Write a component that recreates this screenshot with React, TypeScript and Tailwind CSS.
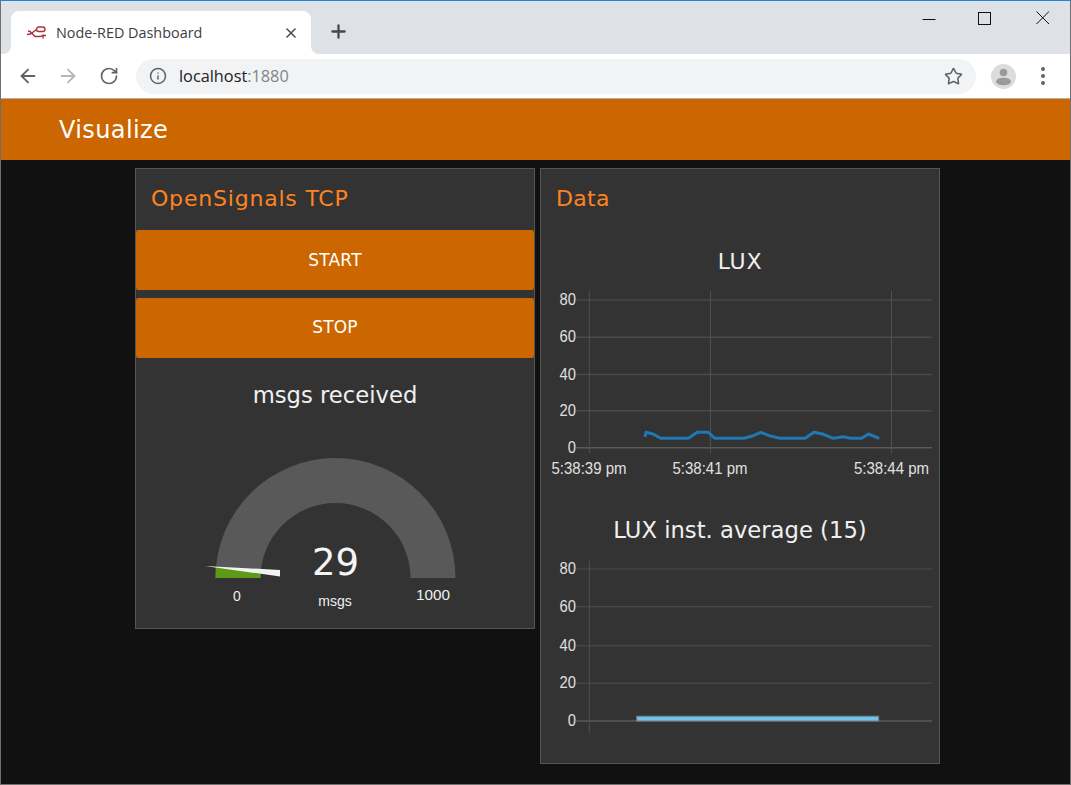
import React from 'react'
import { ArrowLeft, ArrowRight, RotateCw, Info, Star, Plus, X } from 'lucide-react'

const ARIAL = 'Liberation Sans, Arial, sans-serif'

const lineOne =
  '645,437 646,432.3 653,434 660.7,438.3 688.3,438.3 697.3,432.3 708.3,432.3 715,438.3 744,438.3 751.7,436.3 760.7,432.3 769.3,435.7 780,438.3 805,438.3 814,432.3 822.7,434 833.3,438.3 843.3,436.7 850.7,438.3 861.7,438.3 868.3,434 879.3,438.3'

function YLabels({ ys }: { ys: number[] }) {
  return (
    <>
      {['80', '60', '40', '20', '0'].map((label, i) => (
        <text
          key={label}
          x={576}
          y={ys[i] + 5}
          textAnchor="end"
          fontSize={16}
          textLength={label.length * 8.2}
          lengthAdjust="spacingAndGlyphs"
          fill="#e0e0e0"
          fontFamily={ARIAL}
        >
          {label}
        </text>
      ))}
    </>
  )
}

function LuxChart() {
  const ys = [300, 337.3, 374.5, 410.7, 447.7]
  return (
    <svg viewBox="541 280 398 200" className="block w-[398px] h-[200px]">
      {ys.map((y, i) => (
        <line key={y} x1={576} x2={932} y1={y} y2={y} stroke={i === 4 ? '#5a5a5a' : '#4a4a4a'} strokeWidth={1.4} />
      ))}
      {[589.3, 710.5, 891.5].map((x) => (
        <line key={x} x1={x} x2={x} y1={291} y2={453} stroke="#505050" strokeWidth={1} />
      ))}
      <YLabels ys={ys} />
      {[
        ['5:38:39 pm', 551.5],
        ['5:38:41 pm', 672.5],
        ['5:38:44 pm', 854],
      ].map(([label, x]) => (
        <text
          key={label}
          x={x}
          y={474}
          fontSize={16}
          textLength={75}
          lengthAdjust="spacingAndGlyphs"
          fill="#e0e0e0"
          fontFamily={ARIAL}
        >
          {label}
        </text>
      ))}
      <polyline points={lineOne} fill="none" stroke="#1f77b4" strokeWidth={3} strokeLinejoin="round" />
    </svg>
  )
}

function AverageChart() {
  const ys = [569, 606.7, 645.7, 683.3, 721]
  return (
    <svg viewBox="541 550 398 190" className="block w-[398px] h-[190px]">
      {ys.map((y, i) => (
        <line key={y} x1={576} x2={932} y1={y} y2={y} stroke={i === 4 ? '#5a5a5a' : '#454545'} strokeWidth={1.4} />
      ))}
      <line x1={589.3} x2={589.3} y1={561} y2={733} stroke="#505050" strokeWidth={1} />
      <YLabels ys={ys} />
      <rect x={636.7} y={716.2} width={242} height={4.8} fill="#6cc3ec" stroke="#7a7a7a" strokeWidth={1} />
    </svg>
  )
}

function Gauge() {
  return (
    <svg viewBox="136 440 398 188" className="block w-[398px] h-[188px]">
      <path d="M215.5 578 A120 120 0 0 1 455.5 578 L410.5 578 A75 75 0 0 0 260.5 578 Z" fill="#595959" />
      <path d="M215.5 578 L215.7 567 L260.7 571 L260.5 578 Z" fill="#5f9a16" />
      <polygon points="205,566 280,570 280,576.5" fill="#f2f2f2" />
      <text x={335.5} y={575} textAnchor="middle" fontSize={37} fill="#f5f5f5" fontFamily="DejaVu Sans, sans-serif">
        29
      </text>
      <text x={335} y={606} textAnchor="middle" fontSize={14} fill="#f0f0f0" fontFamily={ARIAL}>
        msgs
      </text>
      <text x={237} y={600.5} textAnchor="middle" fontSize={14} fill="#f0f0f0" fontFamily={ARIAL}>
        0
      </text>
      <text x={433} y={600} textAnchor="middle" fontSize={15.3} fill="#f0f0f0" fontFamily={ARIAL}>
        1000
      </text>
    </svg>
  )
}

function NodeRedIcon() {
  return (
    <svg viewBox="0 0 20 14" className="w-[20px] h-[14px]" fill="none" stroke="#a8323a" strokeWidth={1.4}>
      <rect x="9.5" y="1" width="8.5" height="4.5" rx="2.2" />
      <path d="M0 8.5 L3.5 8 L9.5 3.5" />
      <path d="M1 5 L3 5.5 L8 10.5 L12 10.5 C14 10.5 14 10 16 9.5 L19 9.5" />
      <path d="M16 8.5 L16 12.5" />
    </svg>
  )
}

function OrangeButton({ label, className }: { label: string; className: string }) {
  return (
    <button
      className={`w-[398px] h-[60px] mx-auto block bg-[#cc6600] rounded-[2px] text-white text-[17px] tracking-[0.2px] ${className}`}
    >
      {label}
    </button>
  )
}

export default function App() {
  return (
    <div
      className="w-[1071px] h-[785px] flex flex-col overflow-hidden border-t border-t-[#1a8ad4] border-x border-x-[#707070] border-b border-b-[#707070]"
      style={{ fontFamily: 'DejaVu Sans, sans-serif' }}
    >
      {/* Tab strip */}
      <div className="h-[53px] shrink-0 bg-[#dee1e6] flex items-end pl-[10px]">
        <div className="relative w-[300px] h-[43px] bg-white rounded-t-[8px] flex items-center pl-[16px] pr-[12px]">
          <div className="absolute left-[-8px] bottom-0 w-[8px] h-[8px] bg-white">
            <div className="w-full h-full bg-[#dee1e6] rounded-br-[8px]" />
          </div>
          <div className="absolute right-[-8px] bottom-0 w-[8px] h-[8px] bg-white">
            <div className="w-full h-full bg-[#dee1e6] rounded-bl-[8px]" />
          </div>
          <NodeRedIcon />
          <span className="ml-[9px] flex-1 text-[14.4px] text-[#3c4043]" style={{ fontFamily: 'Open Sans, sans-serif' }}>
            Node-RED Dashboard
          </span>
          <X className="w-[16px] h-[16px] text-[#4a4d51]" strokeWidth={2.4} />
        </div>
        <Plus className="ml-[17px] mb-[12px] w-[21px] h-[21px] text-[#44474b]" strokeWidth={2.6} />
        <div className="flex-1" />
        <div className="flex self-start pt-[10px]">
          <svg viewBox="0 0 14 14" className="w-[14px] h-[14px] mr-[42px]" stroke="#111111" fill="none">
            <line x1="0.5" x2="13.5" y1="8.5" y2="8.5" />
          </svg>
          <svg viewBox="0 0 14 14" className="w-[14px] h-[14px] mr-[44px]" stroke="#111111" fill="none">
            <rect x="0.5" y="1.5" width="12" height="12" />
          </svg>
          <svg viewBox="0 0 14 14" className="w-[14px] h-[14px] mr-[20px]" stroke="#111111" fill="none">
            <path d="M0.5 0.5 L13 13 M13 0.5 L0.5 13" />
          </svg>
        </div>
      </div>

      {/* Toolbar */}
      <div className="h-[45px] shrink-0 bg-white border-b border-b-[#b0b0b0] flex items-center pl-[16px] pr-[17px]">
        <ArrowLeft className="w-[22px] h-[22px] text-[#5f6368]" strokeWidth={2} />
        <ArrowRight className="ml-[18px] w-[22px] h-[22px] text-[#b4b6b9]" strokeWidth={2} />
        <RotateCw className="ml-[20px] w-[20px] h-[20px] text-[#5f6368]" strokeWidth={2} />
        <div className="ml-[17px] w-[840px] h-[35px] bg-[#f1f3f4] rounded-full flex items-center pl-[13px] pr-[13px]">
          <Info className="w-[18px] h-[18px] text-[#5f6368]" strokeWidth={2} />
          <span className="ml-[12px] flex-1 text-[16.3px] text-[#202124]" style={{ fontFamily: 'Open Sans, sans-serif' }}>
            localhost<span className="text-[#80868b]">:1880</span>
          </span>
          <Star className="w-[19px] h-[19px] text-[#5f6368]" strokeWidth={2} />
        </div>
        <div className="ml-[15px] w-[25px] h-[25px] rounded-full bg-[#dcdcdc] flex items-center justify-center overflow-hidden">
          <svg viewBox="0 0 25 25" className="w-[25px] h-[25px]" fill="#9a9a9a">
            <circle cx="12.5" cy="8.5" r="3.8" />
            <ellipse cx="12.5" cy="17.5" rx="7.5" ry="3.8" />
          </svg>
        </div>
        <div className="ml-[25px] flex flex-col gap-[3.5px]">
          <div className="w-[3.5px] h-[3.5px] rounded-full bg-[#5f6368]" />
          <div className="w-[3.5px] h-[3.5px] rounded-full bg-[#5f6368]" />
          <div className="w-[3.5px] h-[3.5px] rounded-full bg-[#5f6368]" />
        </div>
      </div>

      {/* Dashboard header */}
      <div className="h-[61px] shrink-0 bg-[#cc6600] flex items-center pl-[58px] text-white text-[24px] tracking-[0.4px]">
        Visualize
      </div>

      {/* Dashboard body */}
      <div className="flex-1 bg-[#111111] flex items-start gap-[5px] pl-[134px] pt-[8px]">
        <div className="w-[400px] h-[461px] bg-[#333333] border border-[#555555]">
          <div className="h-[61px] flex items-center pl-[15px] pb-[2px] text-[22px] tracking-[0.8px] text-[#ff8420]">
            OpenSignals TCP
          </div>
          <OrangeButton label="START" className="pt-[2px]" />
          <div className="h-[8px]" />
          <OrangeButton label="STOP" className="pb-[0px]" />
          <div className="h-[82px] flex items-center justify-center text-[22.7px] text-[#f0f0f0] pb-[8px]">msgs received</div>
          <Gauge />
        </div>

        <div className="w-[400px] h-[596px] bg-[#333333] border border-[#555555]">
          <div className="h-[61px] flex items-center pl-[15px] pb-[2px] text-[22px] tracking-[0.3px] text-[#ff8420]">Data</div>
          <div className="h-[50px] flex items-center justify-center text-[22px] tracking-[0.8px] text-[#f0f0f0] pt-[12px]">LUX</div>
          <LuxChart />
          <div className="h-[70px] flex items-center justify-center text-[22.7px] text-[#f0f0f0] pt-[30px]">
            LUX inst. average (15)
          </div>
          <AverageChart />
        </div>
      </div>
    </div>
  )
}
